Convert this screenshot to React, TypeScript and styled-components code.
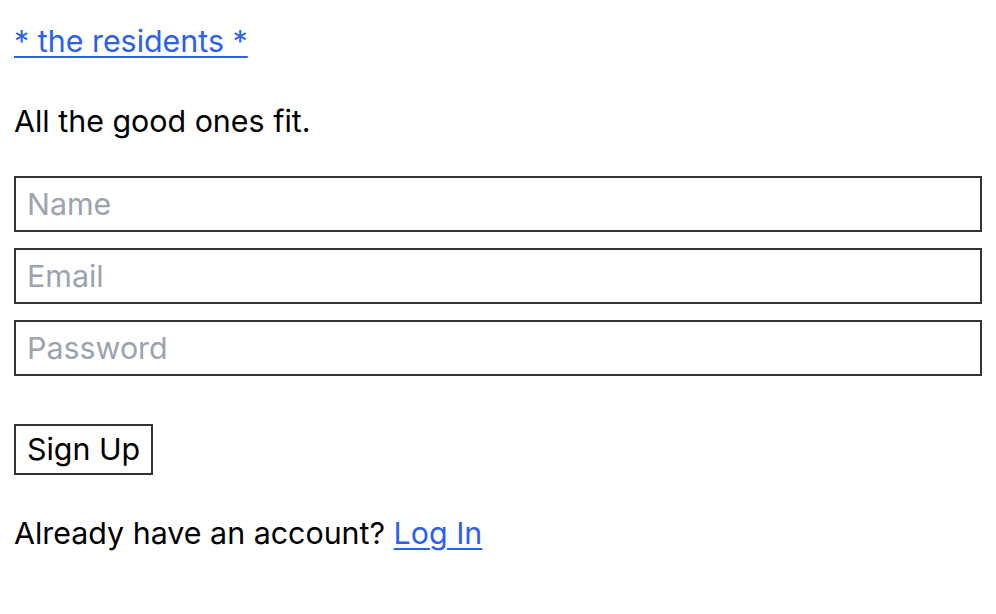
import React from "react";
import styled, { createGlobalStyle } from "styled-components";

const Global = createGlobalStyle`
  html, body { margin: 0; padding: 0; background: #fff; }
  body { font-family: Inter, "Noto Sans", sans-serif; color: #000; }
`;

const Page = styled.div`
  padding: 19px 14px 14px;
  font-size: 30.4px;
  line-height: 45px;
`;

const Brand = styled.a`
  color: #2b5ff0;
  text-decoration: underline;
  text-underline-offset: 4px;
  text-decoration-thickness: 2px;
`;

const Tagline = styled.p`
  margin: 35px 0 0;
`;

const Form = styled.form`
  display: flex;
  flex-direction: column;
  gap: 16px;
  margin-top: 32px;
`;

const Field = styled.input`
  box-sizing: border-box;
  width: 100%;
  height: 56px;
  border: 2px solid #333;
  padding: 0 11px;
  font: inherit;
  color: #000;
  outline: none;
  &::placeholder { color: #9ca3af; }
`;

const Button = styled.button`
  align-self: flex-start;
  box-sizing: border-box;
  height: 51px;
  padding: 0 11px;
  border: 2px solid #333;
  background: #fff;
  font: inherit;
  color: #000;
  margin-top: 32px;
`;

const Footer = styled.p`
  margin: 36px 0 0;
`;

export default function App() {
  return (
    <Page>
      <Global />
      <Brand href="#">* the residents *</Brand>
      <Tagline>All the good ones fit.</Tagline>
      <Form onSubmit={(e) => e.preventDefault()}>
        <Field placeholder="Name" />
        <Field placeholder="Email" type="email" />
        <Field placeholder="Password" type="password" />
        <Button type="submit">Sign Up</Button>
      </Form>
      <Footer>
        Already have an account? <Brand href="#">Log In</Brand>
      </Footer>
    </Page>
  );
}
